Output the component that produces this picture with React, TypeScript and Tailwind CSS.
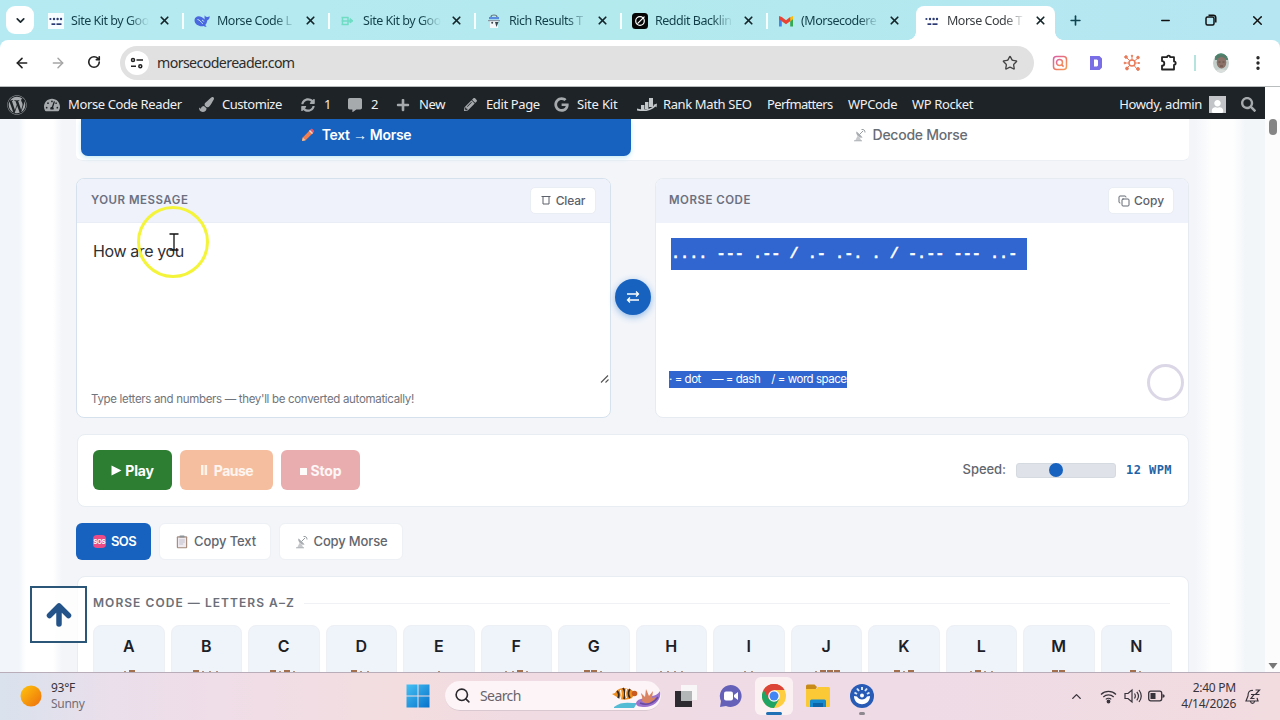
import React from "react";
import { ArrowLeft, ArrowRight, ChevronDown, ChevronUp, Copy, Minus, MoreVertical, Plus, RotateCw, Search, Star, X } from "lucide-react";
import { FaWordpress, FaTachometerAlt, FaPaintBrush, FaSyncAlt, FaCommentAlt, FaPlus, FaPencilAlt, FaGoogle, FaSearch, FaUser } from "react-icons/fa";

const MorseFavicon = ({ boxed = false }: { boxed?: boolean }) => (
  <svg width="16" height="16" viewBox="0 0 16 16">
    {boxed && <rect width="16" height="16" fill="#f7fcff" />}
    <g fill="#2b3a73">
      <circle cx="2.400" cy="6" r="1.100" /><circle cx="6" cy="6" r="1.200" /><circle cx="9.600" cy="6" r="1.200" /><circle cx="13" cy="6" r="1.200" />
      <rect x="3.500" y="10.300" width="3.800" height="1.700" /><rect x="8.500" y="10.300" width="5" height="1.700" />
    </g>
  </svg>
);

const WhaleFavicon = () => (
  <svg width="16" height="16" viewBox="0 0 16 16">
    <path d="M.5 7C1 3.400 4.500 2.600 7.600 4 9.400 4.800 9.800 6 10.600 6.400c0-1.200-.3-2.600.2-4.200.6 1 1 1.600 2 1.800.8.2 1.800-.2 3-.8-.2 2.200-1 3.600-2.600 4.200-.2 2.400-1 3.600-2 4.600l1.400 1.400c-1 .6-2.200.2-3-.4-3.600 1-9.100-1-9.100-6z" fill="#4a68e0" />
    <path d="M3.500 6.500c2 .2 3.600 2.400 5.200 4.400M8 7.200c1 0 1.600.6 1.800 1.400" stroke="#bfe6f2" strokeWidth="1" fill="none" />
  </svg>
);

const MintFavicon = () => (
  <svg width="16" height="16" viewBox="0 0 16 16" fill="none" stroke="#6fdcc4" strokeWidth="1.500">
    <path d="M1.500 4.500h7M1.500 8h6.500M1.500 11.500h7M2.500 4v8M8 4v8M8 8h2.500" /><path d="M10 5.500l3 2.300-3 2.200z" fill="#6fdcc4" strokeWidth="1" />
  </svg>
);

const RobotFavicon = () => (
  <svg width="16" height="16" viewBox="0 0 16 16">
    <path d="M5 4a3 2 0 0 1 6 0" fill="none" stroke="#66727c" strokeWidth="1.200" />
    <rect x="3" y="4" width="10" height="2.200" fill="#5b8be0" />
    <rect x="4" y="7" width="8" height="8" fill="#f4f6f8" /><rect x="2" y="7" width="12" height="1.200" fill="#8b98a4" />
    <circle cx="6.200" cy="9.800" r="1" fill="#39444d" /><path d="M9 9l1.500 5 2-5z" fill="#39444d" />
  </svg>
);

const DiscFavicon = () => (
  <svg width="16" height="16" viewBox="0 0 16 16">
    <rect width="16" height="16" rx="3.500" fill="#050505" />
    <circle cx="8" cy="8" r="4.300" fill="none" stroke="#fff" strokeWidth="1.200" />
    <path d="M5.500 10.600L12.500 3.600" stroke="#fff" strokeWidth="1.200" />
  </svg>
);

const MailFavicon = () => (
  <svg width="16" height="16" viewBox="0 0 16 16">
    <path d="M1 4v9.500h2.800V6z" fill="#4285f4" /><path d="M15 4v9.500h-2.800V6z" fill="#34a853" />
    <path d="M12.200 4.300L15 3v3.200l-2.800 2.200z" fill="#fbbc04" />
    <path d="M1 3l2.800 1L8 7.300 12.200 4v4.200L8 11.300 1 6.200z" fill="#ea4335" />
  </svg>
);

const PencilEmoji = () => (
  <svg width="14" height="14" viewBox="0 0 14 14">
    <path d="M1 13l.8-3.600L9 2l3 3-7.400 7.200z" fill="#f07f52" /><path d="M9 2l1.200-1.200c.8-.6 3.600 1.800 2.800 3L12 5z" fill="#e8556b" />
    <path d="M8 3l3 3 1-1-3-3z" fill="#f3d5cc" /><path d="M1 13l.8-3.600 2.800 2.800z" fill="#f0c39c" />
  </svg>
);

const DishEmoji = () => (
  <svg width="14" height="14" viewBox="0 0 14 14">
    <path d="M3.500 3.500c-.8 3 2.600 6.500 6 6L7.500 7z" fill="#c3c6c9" /><path d="M3.500 3.500l6 6c-3 .8-6.800-2.500-6-6z" fill="#a9adb1" />
    <path d="M6.500 6.500L10 3M8.500 1.500c2.200-.4 3.600.8 3.500 3" stroke="#989da1" strokeWidth="1" fill="none" />
    <path d="M4.500 8L2 13h6.500L6.500 9z" fill="#c7c9cc" /><path d="M1 12.800h8" stroke="#b0b4b7" strokeWidth="1" />
  </svg>
);

const ClipboardEmoji = () => (
  <svg width="12" height="14" viewBox="0 0 12 14">
    <rect x=".8" y="1.200" width="10.400" height="12" rx="1" fill="#a88f80" /><rect x="2" y="2.600" width="8" height="9.600" fill="#eeeaf0" />
    <rect x="3.500" y=".4" width="5" height="2.200" rx=".6" fill="#8b9298" />
    <path d="M3.200 5h5.600M3.200 7h5.600M3.200 9h4" stroke="#b8b5c2" strokeWidth=".8" />
  </svg>
);

const tabs = [
  { title: "Site Kit by Goo", icon: <MorseFavicon boxed /> },
  { title: "Morse Code L", icon: <WhaleFavicon /> },
  { title: "Site Kit by Goo", icon: <MintFavicon /> },
  { title: "Rich Results T", icon: <RobotFavicon /> },
  { title: "Reddit Backlin", icon: <DiscFavicon /> },
  { title: "(Morsecodere", icon: <MailFavicon /> },
  { title: "Morse Code T", icon: <MorseFavicon />, active: true },
];

function TabStrip() {
  return (
    <div className="flex h-10 bg-gradient-to-r from-[#b6eaf2] via-[#b3eaee] to-[#b5e6f2] text-[#123f49]">
      <div className="flex w-10 shrink-0 items-center pl-1.5">
        <div className="flex size-7 items-center justify-center rounded-[9px] bg-white">
          <ChevronDown size={13} strokeWidth={3.200} color="#1d2b30" />
        </div>
      </div>
      {tabs.map((t, i) => (
        <div key={i} className={t.active ? "relative mt-1.5 flex w-[139px] shrink-0 items-center rounded-t-lg bg-white pb-[5px] pl-2 text-[#3c4043]" : "flex w-[146px] shrink-0 items-center pt-px pl-2"}>
          <span className="size-4 shrink-0">{t.icon}</span>
          <span className="ml-[7px] w-[78px] shrink-0 pt-0.5 text-[12.500px] tracking-[-0.48px] whitespace-nowrap [mask-image:linear-gradient(to_right,#000_74%,transparent_100%)]">{t.title}</span>
          <X size={13} strokeWidth={3.200} color="#15262b" className="ml-[9px] shrink-0" />
          {!t.active && i < 5 && <span className="ml-[11px] h-4 w-0.5 bg-white/90" />}
          {t.active && (
            <>
              <span className="absolute bottom-0 -left-2 size-2 bg-[radial-gradient(circle_at_0_0,transparent_7.500px,#fff_8px)]" />
              <span className="absolute -right-2 bottom-0 size-2 bg-[radial-gradient(circle_at_100%_0,transparent_7.500px,#fff_8px)]" />
            </>
          )}
        </div>
      ))}
      <div className="flex w-10 items-center justify-center"><Plus size={15} strokeWidth={2.600} color="#0f4450" /></div>
      <div className="ml-auto flex items-center">
        <div className="flex w-[46px] justify-center"><Minus size={13} strokeWidth={2.400} color="#111" /></div>
        <div className="flex w-[46px] justify-center">
          <svg width="12" height="12" viewBox="0 0 12 12" fill="none" stroke="#111" strokeWidth="1.500"><rect x="1" y="3" width="8" height="8" rx="1.500" /><path d="M3.500 1.200h4.700a2.600 2.600 0 0 1 2.600 2.600v4.700" /></svg>
        </div>
        <div className="flex w-[46px] justify-center"><X size={15} strokeWidth={2.400} color="#111" /></div>
      </div>
    </div>
  );
}

function Toolbar() {
  return (
    <div className="bg-[#b5e8f1]">
      <div className="flex h-[47px] items-center rounded-t-lg border-b border-[#b9bdbd] bg-white">
        <div className="flex w-[112px] shrink-0 pl-1">
          <div className="flex w-9 justify-center"><ArrowLeft size={16} strokeWidth={2.400} color="#222" /></div>
          <div className="flex w-9 justify-center"><ArrowRight size={16} strokeWidth={2.200} color="#a5a5a5" /></div>
          <div className="flex w-9 justify-center"><RotateCw size={14} strokeWidth={2.800} color="#222" /></div>
        </div>
        <div className="ml-2 flex h-[34px] w-[914px] shrink-0 items-center rounded-full bg-[#e1e1e1] pr-4 pl-[5px]">
          <span className="flex size-6 items-center justify-center rounded-full bg-white">
            <svg width="14" height="14" viewBox="0 0 14 14" fill="none" stroke="#222" strokeWidth="1.500"><circle cx="3" cy="4" r="1.500" /><path d="M6.500 4H13M1 10.200h5" /><circle cx="10.300" cy="10.200" r="1.500" /></svg>
          </span>
          <span className="ml-2 text-[14.200px] tracking-[-0.6px] text-[#2d2d2d]">morsecodereader.com</span>
          <Star size={16} strokeWidth={2} color="#444" className="ml-auto" />
        </div>
        <div className="ml-2 flex shrink-0">
          <div className="flex w-9 items-center justify-center">
            <svg width="16" height="16" viewBox="0 0 16 16" fill="none" strokeWidth="1.500">
              <defs><linearGradient id="insta" x1="0" y1="0" x2="1" y2="1"><stop stopColor="#d960a8" /><stop offset=".6" stopColor="#ef7c62" /><stop offset="1" stopColor="#f3a05c" /></linearGradient></defs>
              <rect x="1.500" y="1.500" width="13" height="13" rx="3" stroke="url(#insta)" /><circle cx="7.500" cy="7.500" r="3" stroke="url(#insta)" /><path d="M9.600 9.600l2 2" stroke="#ef7c62" />
            </svg>
          </div>
          <div className="flex w-9 items-center justify-center">
            <svg width="14" height="16" viewBox="0 0 14 16"><path fillRule="evenodd" d="M1 1h9.500L13 3.500v9L10.500 15H1zM5 4.500v7h3L9 10.400V5.600L8 4.500z" fill="#7a6ee6" /></svg>
          </div>
          <div className="flex w-9 items-center justify-center">
            <svg width="18" height="18" viewBox="0 0 18 18" fill="#e87a58" stroke="#e87a58"><path d="M9 9L3 3M9 9V2M9 9l6-5M9 9h7M9 9l5 6M9 9l-5 5M9 9H2" strokeWidth="1" /><circle cx="9" cy="9" r="3" fill="#fff" strokeWidth="1.500" /><circle cx="3" cy="3" r="1.300" /><circle cx="9" cy="1.800" r=".7" /><circle cx="15" cy="3.500" r="1.300" /><circle cx="16" cy="9" r=".6" /><circle cx="15" cy="15" r="1.400" /><circle cx="4" cy="14.500" r="1.400" /><circle cx="1.800" cy="9" r=".8" /></svg>
          </div>
          <div className="flex w-[38px] items-center justify-center">
            <svg width="18" height="18" viewBox="0 0 18 18" fill="none" stroke="#222" strokeWidth="1.800" strokeLinejoin="round"><path d="M2 3.200h5a1.600 1.600 0 0 1 3.200 0H14v4.200a1.700 1.700 0 0 1 0 3.400V15.500H2v-3.800a2.300 2.300 0 0 0 0-4.600z" /></svg>
          </div>
        </div>
        <span className="ml-[6px] h-4 w-0.5 bg-[#b5e3de]" />
        <svg width="16" height="20" viewBox="0 0 16 20" className="ml-[17px]">
          <defs><clipPath id="face"><ellipse cx="8" cy="10" rx="8" ry="9.700" /></clipPath></defs>
          <g clipPath="url(#face)"><rect width="16" height="20" fill="#c3cecb" /><rect x="2" width="13" height="7" fill="#4a8a70" /><ellipse cx="8.500" cy="9.500" rx="4.800" ry="6" fill="#8b7167" /><path d="M3 6.500c3-3.500 8-3.500 11 0l-1-4.500H4z" fill="#567a69" /><path d="M0 20c2-5 13-5 16 0z" fill="#d9dedc" /><path d="M5.500 9h2M9.500 9h2M7 13h3" stroke="#5b4740" strokeWidth=".8" /></g>
        </svg>
        <MoreVertical size={18} strokeWidth={2.500} color="#222" className="ml-[20px]" />
      </div>
    </div>
  );
}

function BarItem({ icon, label, className }: { icon?: React.ReactNode; label: string; className: string }) {
  return (
    <div className={"flex shrink-0 items-center " + className}>
      {icon && <span className="mr-[7px] flex w-[18px] shrink-0 justify-center text-[#a7aaad]">{icon}</span>}
      <span className="whitespace-nowrap">{label}</span>
    </div>
  );
}

function AdminBar() {
  return (
    <div className="flex h-8 w-[1265px] items-center bg-[#1d2327] pt-[3px] text-[13px] tracking-[-0.38px] text-[#f0f0f1]">
      <div className="flex w-[43px] shrink-0 pl-[7px] text-[#a7aaad]"><FaWordpress size={20} /></div>
      <BarItem className="w-[154px]" icon={<FaTachometerAlt size={16} />} label="Morse Code Reader" />
      <BarItem className="w-[102px] tracking-[-0.46px]" icon={<FaPaintBrush size={15} />} label="Customize" />
      <BarItem className="w-[47px]" icon={<FaSyncAlt size={14} />} label="1" />
      <BarItem className="w-[48px]" icon={<FaCommentAlt size={14} />} label="2" />
      <BarItem className="w-[67px]" icon={<FaPlus size={14} />} label="New" />
      <BarItem className="w-[91px]" icon={<FaPencilAlt size={13} />} label="Edit Page" />
      <BarItem className="w-[83px] tracking-[-0.2px]" icon={<FaGoogle size={15} />} label="Site Kit" />
      <BarItem
        className="w-[132px] pl-[3px]"
        icon={<svg width="20" height="14" viewBox="0 0 20 14" fill="#c4c7c9" className="shrink-0"><path d="M4 7h3.400v5H4zM8 4h3.400v7H8zM12 0h4v9h-4z" /><path d="M0 10.500c6 2 14 1 17-3l-1-.6 4-1.500-.5 4-1-1c-4 4.500-12 5.500-18.500 4z" /></svg>}
        label="Rank Math SEO"
      />
      <BarItem className="w-[81px] tracking-[-0.66px]" label="Perfmatters" />
      <BarItem className="w-[64px]" label="WPCode" />
      <BarItem className="w-[70px]" label="WP Rocket" />
      <div className="ml-auto flex items-center pr-[9px]">
        <span className="whitespace-nowrap">Howdy, admin</span>
        <span className="ml-[7px] flex size-[17px] items-end justify-center bg-[#c3c4c7] text-white"><FaUser size={13} /></span>
        <FaSearch size={15} color="#a7aaad" className="ml-[15px]" />
      </div>
    </div>
  );
}

const panelHeader = "flex h-[44px] shrink-0 items-center justify-between bg-[#eff2fa] pr-3.5 text-[11.500px] font-semibold tracking-[0.5px] text-[#6b7080]";
const panelButton = "flex h-[27px] w-[66px] items-center justify-center rounded-[5px] border border-[#e9edf4] bg-white text-[12px] font-medium text-[#5c616b]";

function Panels() {
  return (
    <div className="mt-[17px] -ml-px flex h-[240px]">
      <section className="flex w-[535px] flex-col overflow-hidden rounded-lg border border-[#d5e2ee] bg-white">
        <div className={panelHeader + " border-b border-[#e9edf5] pl-3.5"}>
          <span>YOUR MESSAGE</span>
          <span className={panelButton + " tracking-[-0.15px]"}>
            <svg width="10" height="11" viewBox="0 0 10 11" fill="none" stroke="#5c616b" className="mr-[5px]"><path d="M.5 1.500h9M2 1.500v7.500h6V1.500" /></svg>
            Clear
          </span>
        </div>
        <div className="flex grow justify-between pt-[16px] pl-[16px]">
          <p className="text-[16px] leading-[24px] tracking-[-0.38px] text-[#2e3035]">How are you</p>
          <svg width="10" height="10" viewBox="0 0 10 10" className="self-end" stroke="#555" strokeWidth="1.100"><path d="M1 8.500L8 1.500M5.500 8.500L8.500 5.500" /></svg>
        </div>
        <p className="h-[33px] shrink-0 pt-[7px] pl-3.5 text-[11.500px] leading-[17px] tracking-[-0.32px] text-[#70747c]">Type letters and numbers — they'll be converted automatically!</p>
      </section>
      <div className="flex w-[44px] shrink-0 items-center justify-center pr-px pb-[3px]">
        <div className="flex size-9 shrink-0 items-center justify-center rounded-full bg-[#1762bf] shadow-[0_2px_7px_#8eb8e8]">
          <svg width="14" height="14" viewBox="0 0 14 14" fill="none" stroke="#fff" strokeWidth="1.300"><path d="M1 4h11.500M10 1.500L12.500 4 10 6.500M13 10H1.500M4 7.500L1.500 10 4 12.500" /></svg>
        </div>
      </div>
      <section className="flex w-[534px] flex-col overflow-hidden rounded-lg border border-[#e6ebf2] bg-white">
        <div className={panelHeader + " pb-px pl-[13px]"}>
          <span>MORSE CODE</span>
          <span className={panelButton + " tracking-[0px]"}><Copy size={12} strokeWidth={1.900} className="mr-[4px]" />Copy</span>
        </div>
        <div className="flex h-[148px] shrink-0 items-start pt-[15px] pl-[15px]">
          <span className="h-8 w-[356px] bg-[#3165d0] font-['Liberation_Mono',monospace] text-[15.200px] leading-[33px] font-bold whitespace-pre text-white [-webkit-text-stroke:0.4px_white]">{".... --- .-- / .- .-. . / -.-- --- ..- "}</span>
        </div>
        <div className="pl-[13px]">
          <span className="flex h-[17px] w-[178px] items-center bg-[#3165d0] text-[11.500px] tracking-[-0.46px] whitespace-pre text-white">{"· = dot    — = dash    / = word space"}</span>
        </div>
      </section>
    </div>
  );
}

const controlButton = "flex h-10 items-center justify-center rounded-md text-[14px] font-bold";

function Controls() {
  return (
    <div className="mt-4 flex h-[73px] items-center gap-2 rounded-lg border border-[#e8edf3] bg-white pr-4 pb-px pl-[15px]">
      <div className={controlButton + " w-[79px] bg-[#2d7d32] tracking-[-0.2px] text-white"}><svg width="11" height="11" viewBox="0 0 11 11" fill="#fff" className="mr-[3px]"><path d="M.5.500v10L10.500 5.500z" /></svg>Play</div>
      <div className={controlButton + " w-[93px] bg-[#f5bf9f] tracking-[-0.5px] text-white/85"}><svg width="8" height="10" viewBox="0 0 8 10" fill="#fff4ea" className="mr-1.5"><path d="M1 0h2.500v10H1zM4.600 0h2.500v10H4.600z" /></svg>Pause</div>
      <div className={controlButton + " w-[79px] bg-[#e9adaf] tracking-[-0.2px] text-white/90"}><span className="mt-0.5 mr-1 size-[7px] bg-white/95" />Stop</div>
      <span className="ml-auto text-[13px] font-medium tracking-[-0.05px] text-[#62666e]">Speed:</span>
      <div className="ml-0.5 flex h-[15px] w-[100px] shrink-0 items-center rounded-[3px] border border-[#d5dae1] bg-[#dfe3e9] pl-8">
        <span className="size-3.5 rounded-full bg-[#1762bf]" />
      </div>
      <span className="ml-0.5 w-[46px] shrink-0 font-['DejaVu_Sans_Mono',monospace] text-[12px] font-bold tracking-[0.450px] whitespace-nowrap text-[#1f63a6]">12 WPM</span>
    </div>
  );
}

const quickButton = "flex h-[37px] items-center justify-center rounded-md text-[13px]";

function QuickActions() {
  return (
    <div className="mt-4 -ml-px flex gap-2">
      <div className={quickButton + " w-[75px] gap-[5px] bg-[#1762bf] pl-0.5 font-semibold tracking-[-0.6px] text-white"}>
        <span className="flex size-[13px] items-center justify-center rounded-sm bg-[#ec4b86] text-[6px] font-bold tracking-tight text-white">SOS</span>SOS
      </div>
      <div className={quickButton + " w-[112px] gap-[6px] border border-[#edf0f4] bg-white pl-0.5 font-medium tracking-[-0.1px] text-[#62666e]"}><ClipboardEmoji />Copy Text</div>
      <div className={quickButton + " w-[124px] gap-[5px] border border-[#edf0f4] bg-white font-medium tracking-[-0.15px] text-[#62666e]"}><DishEmoji />Copy Morse</div>
    </div>
  );
}

const letters = [
  ["A", ".-"], ["B", "-..."], ["C", "-.-."], ["D", "-.."], ["E", "."], ["F", "..-."], ["G", "--."],
  ["H", "...."], ["I", ".."], ["J", ".---"], ["K", "-.-"], ["L", ".-.."], ["M", "--"], ["N", "-."],
];

function LetterTable() {
  return (
    <div className="mt-4 h-[140px] rounded-t-lg border border-[#e8edf3] bg-white px-[15px] pt-[17px]">
      <div className="flex items-center gap-[9px]">
        <h2 className="text-[12px] leading-[18px] font-semibold tracking-[1.050px] whitespace-nowrap text-[#6b6f78]">MORSE CODE — LETTERS A–Z</h2>
        <span className="mr-[3px] h-px grow bg-[#eff1f5]" />
      </div>
      <div className="mt-[13px] mr-px grid grid-cols-14 gap-[6px]">
        {letters.map(([letter, code]) => (
          <div key={letter} className="flex h-20 flex-col items-center rounded-lg border border-[#edf0f5] bg-[#eff3fa] pt-[8px]">
            <span className="text-[16px] leading-6 font-semibold text-[#1c2027]">{letter}</span>
            <span className="mt-[5px] flex h-4 items-center gap-px text-[#a3704f]">
              {code.split("").map((c, i) => (
                <span key={i} className={c === "-" ? "h-[2px] w-[6px] bg-current" : "mx-[2px] mt-[2px] size-[2px] rounded-full bg-current"} />
              ))}
            </span>
          </div>
        ))}
      </div>
    </div>
  );
}

function Page() {
  return (
    <div className="flex h-[553px] overflow-hidden">
      <main className="relative h-full w-[1265px] shrink-0 overflow-hidden bg-[linear-gradient(to_right,#f2f6fa_0,#f2f6fa_19px,#fff_26px,#fff_53px,#f3f5f9_62px,#f3f5f9_1195px,#fefefe_1212px,#fefefe_1233px,#f3f6f9_1245px,#f3f6f9_1265px)] pl-[77px] font-['Inter',sans-serif]">
        <div className="w-[1112px]">
          <div className="-ml-px flex h-[42px] w-[1113px] rounded-b-md border-b border-[#eceff3] bg-white pr-1 pl-[5px]">
            <div className="flex h-[37px] w-[550px] items-start justify-center gap-[7px] rounded-b-[7px] bg-[#1762bf] pt-[5px] text-[14px] leading-[21px] font-semibold tracking-[-0.3px] text-white shadow-[0_2px_5px_#c7ebf5]">
              <span className="pt-1"><PencilEmoji /></span>
              <span>Text <span className="font-['Liberation_Sans',sans-serif] font-normal">→</span> Morse</span>
            </div>
            <div className="flex grow justify-center gap-[6px] pt-[5px] pl-1 text-[14px] leading-[21px] font-medium tracking-[-0.25px] text-[#686c73]">
              <span className="pt-1"><DishEmoji /></span>Decode Morse
            </div>
          </div>
          <Panels />
          <Controls />
          <QuickActions />
          <LetterTable />
        </div>
        <div className="absolute top-[467px] left-[30px] flex size-[57px] items-center justify-center border-2 border-[#2c5677] bg-white/80">
          <svg width="28" height="26" viewBox="0 0 28 26" fill="none" stroke="#24538a" strokeWidth="5.500" strokeLinecap="round" strokeLinejoin="round"><path d="M14 22V5M4.500 13.500L14 4l9.500 9.500" /></svg>
        </div>
        <div className="absolute top-[87px] left-[137px] size-[72px] rounded-full border-[3px] border-[#f4f43a]" />
        <svg width="10" height="18" viewBox="0 0 10 18" className="absolute top-[114px] left-[169px]" fill="none" stroke="#111" strokeWidth="1.300"><path d="M.5 1h9M.5 17h9M5 1v16" /></svg>
        <div className="absolute top-[245px] left-[1147px] size-[37px] rounded-full border-[3px] border-[#dcd7e6]" />
      </main>
      <div className="-mt-8 flex h-[585px] w-[15px] flex-col items-center bg-[#fcfcfc] pt-1.5 pb-[3px]">
        <svg width="10" height="7" viewBox="0 0 10 7" fill="#858585"><path d="M5 0l4.500 6h-9z" /></svg>
        <span className="mt-[19px] h-4 w-2 rounded-full bg-[#858585]" />
        <svg width="10" height="7" viewBox="0 0 10 7" fill="#777" className="mt-auto"><path d="M5 7l4.500-6h-9z" /></svg>
      </div>
      <div className="sr-only" />
    </div>
  );
}

function Taskbar() {
  return (
    <div className="relative flex h-12 items-center border-t border-[#b8adb8] bg-[linear-gradient(to_right,#d9e2ed_0,#eadfeb_110px,#efdde8_210px,#f3dddf_400px,#f0dbe3_520px,#eedbe6_900px,#f2dce0_1280px)] pb-px text-[12px] leading-4 text-[#37333a]">
      <svg width="22" height="22" viewBox="0 0 22 22" className="ml-5 shrink-0"><defs><linearGradient id="sun" x1="0" y1="0" x2="1" y2="1"><stop stopColor="#ffc60a" /><stop offset="1" stopColor="#ed6e0d" /></linearGradient></defs><circle cx="11" cy="11" r="10.500" fill="url(#sun)" /></svg>
      <div className="ml-[9px] w-[355px] shrink-0 tracking-[-0.3px]"><div>93°F</div><div className="text-[#736c77]">Sunny</div></div>
      <svg width="24" height="24" viewBox="0 0 24 24" className="shrink-0"><defs><linearGradient id="win" x1="0" y1="0" x2="1" y2="1"><stop stopColor="#45c1f4" /><stop offset="1" stopColor="#0871ca" /></linearGradient></defs><path d="M.5.500h11v11H.500zM12.500.500h11v11h-11zM.500 12.500h11v11H.500zM12.500 12.500h11v11h-11z" fill="url(#win)" /></svg>
      <div className="ml-[15px] flex h-[30px] w-[216px] shrink-0 items-center overflow-hidden rounded-full border-b border-[#d9c8cf] bg-[#fcf4f6] pl-[9px]">
        <Search size={17} strokeWidth={2.300} color="#2c2a2e" />
        <span className="ml-[9px] text-[14px] tracking-[-0.58px] text-[#68636b]">Search</span>
        <svg width="50" height="24" viewBox="0 0 50 24" className="ml-auto">
          <path d="M3 23c7-6 15-4 23-4l-3 5H3z" fill="#55bcd6" />
          <path d="M1 10l3-1c2-4 6-5 9-5l8 2c2 2 2 6 0 8-5 2-10 3-15-1z" fill="#ef8d1d" />
          <path d="M6 7c2 2 2 5 1 7M12 4c3 4 2 8 1 11M19 5c-2 3-2 6 0 9" stroke="#352923" strokeWidth="1.800" fill="none" />
          <path d="M9.500 6c1 3 1 6 0 9M15.500 5c-1 3-1 7 0 9" stroke="#fff" strokeWidth="1.200" fill="none" />
          <circle cx="23.500" cy="9.500" r="2.800" fill="#c95b20" />
          <path d="M25 19c1-4 6-4 12-6 5-1 10-2 12-6 2 10-7 16-15 16-6 0-9-1-9-4z" fill="#9c72cf" />
          <path d="M31 17c1-4-1-6-1-8l4 4 1-8 3 7 4-5-1 7 4-1c-2 5-9 9-14 4z" fill="#d98362" /><path d="M29 19c7 3 14 0 18-6" stroke="#694a9f" strokeWidth="1.500" fill="none" />
        </svg>
      </div>
      <div className="ml-px flex w-[46px] shrink-0 justify-center pl-0.5"><svg width="24" height="24" viewBox="0 0 24 24"><rect x="7" y="1" width="16" height="15" fill="#f9f6f7" /><rect x="1" y="7" width="17" height="16" fill="#2d2b2f" /><rect x="7" y="7" width="11" height="10" fill="#b4b7b8" /></svg></div>
      <div className="flex w-11 shrink-0 justify-center"><svg width="24" height="24" viewBox="0 0 24 24"><path d="M12.500 1A11 11 0 1 1 8 22l-6 1 1-6A11 11 0 0 1 12.500 1z" fill="#6561b8" /><rect x="6" y="7.500" width="9" height="9" rx="2" fill="#fff" /><path d="M16 11l4-3v8l-4-3z" fill="#fff" /></svg></div>
      <div className="relative ml-[3px] flex h-[38px] w-[38px] shrink-0 items-center justify-center rounded-md bg-[#fbf1f3]">
        <svg width="24" height="24" viewBox="0 0 24 24"><circle cx="12" cy="12" r="12" fill="#ffcd40" /><path d="M12 12L1.600 6A12 12 0 0 1 22.400 6H12z" fill="#dc4437" /><path d="M12 12L1.600 6A12 12 0 0 0 12 24l5.200-9z" fill="#1fa463" /><path d="M12 6h10.400a12 12 0 0 0-20.800 0l5.200 9z" fill="#dc4437" /><circle cx="12" cy="12" r="5.800" fill="#fff" /><circle cx="12" cy="12" r="4.500" fill="#4285f4" /></svg>
        <span className="absolute bottom-0 h-[3px] w-4 rounded-full bg-[#1f70b5]" />
      </div>
      <div className="ml-[3px] flex w-11 shrink-0 justify-center"><svg width="26" height="24" viewBox="0 0 26 24"><path d="M1 2q0-1.500 1.500-1.500h7L12 3l-2 3H1z" fill="#c88b1a" /><path d="M1 5h10l2-2h10.500q1.500 0 1.500 1.500V22q0 1-1.500 1h-21Q1 23 1 22z" fill="#fbc936" /><path d="M5 23v-6q0-1.500 1.500-1.500h13q1.500 0 1.500 1.500v6z" fill="#178bd0" /><path d="M8 19h10v4H8z" fill="#0c65a8" /></svg></div>
      <div className="relative flex w-11 shrink-0 justify-center">
        <svg width="24" height="24" viewBox="0 0 24 24"><circle cx="12" cy="12" r="12" fill="#285bb5" /><path d="M4 12c0 11 16 11 16 0l-3 .5c-2 4-8 4-10 0z" fill="#fff" /><circle cx="12" cy="11.500" r="2" fill="#fff" /><path d="M4.500 8.500L7 10M7 4.500L9 7M12 3v3M17 4.500L15 7M19.500 8.500L17 10" stroke="#d7e7ff" strokeWidth="2" fill="none" /></svg>
        <span className="absolute top-[28px] h-[3px] w-1.5 rounded-full bg-[#8d8790]" />
      </div>
      <div className="ml-auto flex shrink-0 items-center pr-[19px]">
        <ChevronUp size={15} strokeWidth={2.200} />
        <svg width="17" height="15" viewBox="0 0 17 15" fill="none" stroke="#37333a" strokeWidth="1.200" className="ml-[16px]"><path d="M1 5.500a10.500 10.500 0 0 1 15 0M3.300 8a7.300 7.300 0 0 1 10.400 0M5.800 10.400a3.800 3.800 0 0 1 5.400 0" /><circle cx="8.500" cy="12.500" r="1.300" fill="#37333a" /></svg>
        <svg width="18" height="16" viewBox="0 0 18 16" fill="none" stroke="#37333a" strokeWidth="1.200" className="ml-[7px]"><path d="M1 5.500h3l4-3.500v12l-4-3.500H1zM10.500 5.500c1 1.500 1 3.500 0 5M12.800 3.800c2 2.500 2 6 0 8.500M15 2c3 4 3 8 0 12" /></svg>
        <svg width="17" height="12" viewBox="0 0 17 12" className="ml-[6px]"><rect x=".7" y="1.200" width="13" height="9.600" rx="2" fill="none" stroke="#37333a" strokeWidth="1.300" /><rect x="2.500" y="3" width="5" height="6" fill="#37333a" /><path d="M14.500 4v4l2-1V5z" fill="#37333a" /></svg>
        <div className="ml-[14px] w-[57px] text-right tracking-[-0.25px] whitespace-nowrap"><div>2:40 PM</div><div>4/14/2026</div></div>
        <svg width="16" height="17" viewBox="0 0 16 17" fill="none" stroke="#37333a" strokeWidth="1.200" className="ml-[9px]"><path d="M8 2.500C4 2 3 4.500 3 8L1 13h12l-1-3M5.500 13.500c.5 2.500 3.500 2.500 4 0M6 6.500h3l-3 4h3.500M10.500 2h4l-4 4.500h4" /></svg>
      </div>
    </div>
  );
}

export default function App() {
  return (
    <div className="h-[720px] w-[1280px] overflow-hidden bg-white font-['Noto_Sans',sans-serif]">
      <TabStrip />
      <Toolbar />
      <AdminBar />
      <Page />
      <Taskbar />
    </div>
  );
}
